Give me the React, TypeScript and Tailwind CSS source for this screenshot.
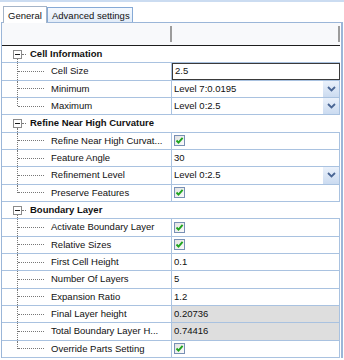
import React from "react";

type Row =
  | { kind: "cat"; label: string }
  | {
      kind: "prop";
      label: string;
      type: "text" | "edit" | "combo" | "check" | "readonly";
      value?: string;
      last?: boolean;
    };

const rows: Row[] = [
  { kind: "cat", label: "Cell Information" },
  { kind: "prop", label: "Cell Size", type: "edit", value: "2.5" },
  { kind: "prop", label: "Minimum", type: "combo", value: "Level 7:0.0195" },
  { kind: "prop", label: "Maximum", type: "combo", value: "Level 0:2.5", last: true },
  { kind: "cat", label: "Refine Near High Curvature" },
  { kind: "prop", label: "Refine Near High Curvat...", type: "check" },
  { kind: "prop", label: "Feature Angle", type: "text", value: "30" },
  { kind: "prop", label: "Refinement Level", type: "combo", value: "Level 0:2.5" },
  { kind: "prop", label: "Preserve Features", type: "check", last: true },
  { kind: "cat", label: "Boundary Layer" },
  { kind: "prop", label: "Activate Boundary Layer", type: "check" },
  { kind: "prop", label: "Relative Sizes", type: "check" },
  { kind: "prop", label: "First Cell Height", type: "text", value: "0.1" },
  { kind: "prop", label: "Number Of Layers", type: "text", value: "5" },
  { kind: "prop", label: "Expansion Ratio", type: "text", value: "1.2" },
  { kind: "prop", label: "Final Layer height", type: "readonly", value: "0.20736" },
  { kind: "prop", label: "Total Boundary Layer H...", type: "readonly", value: "0.74416" },
  { kind: "prop", label: "Override Parts Setting", type: "check", last: true },
];

function CheckBox() {
  return (
    <div className="ml-[2px] flex h-[11px] w-[11px] items-center justify-center border border-[#7890b4] bg-gradient-to-br from-[#e2e2e2] to-[#fbfbfb]">
      <svg width="9" height="9" viewBox="0 0 9 9">
        <path d="M1.5 4.5 L3.5 6.6 L7.6 1.8" fill="none" stroke="#1fa51f" strokeWidth="1.9" />
      </svg>
    </div>
  );
}

function ValueCell({ row }: { row: Extract<Row, { kind: "prop" }> }) {
  if (row.type === "edit") {
    return (
      <div className="flex h-full w-[168px] items-center border border-[#3a3a3a] bg-white pl-[2px]">
        {row.value}
      </div>
    );
  }
  if (row.type === "combo") {
    return (
      <div className="flex h-full w-[168px] items-center border-r border-[#a9c2e0]">
        <span className="flex-1 pl-[2px]">{row.value}</span>
        <div className="flex h-full w-[16px] items-center justify-center bg-gradient-to-b from-[#eaf1fb] to-[#cbdbf0]">
          <svg width="9" height="6" viewBox="0 0 9 6">
            <path d="M1 1 L4.5 4.5 L8 1" fill="none" stroke="#4a6694" strokeWidth="1.8" />
          </svg>
        </div>
      </div>
    );
  }
  if (row.type === "check") {
    return (
      <div className="flex h-full w-[168px] items-center border-r border-[#a9c2e0]">
        <CheckBox />
      </div>
    );
  }
  return (
    <div
      className={`flex h-full w-[168px] items-center border-r border-[#a9c2e0] pl-[2px] ${
        row.type === "readonly" ? "bg-[#dedede]" : ""
      }`}
    >
      {row.value}
    </div>
  );
}

function GridRow({ row }: { row: Row }) {
  if (row.kind === "cat") {
    return (
      <div className="flex h-[17.33px] w-[338px] items-center border-b border-[#a9c2e0]">
        <div className="ml-[11px] flex h-full w-[9px] flex-col items-center">
          <div className="flex-1" />
          <div className="flex h-[9px] w-[9px] items-center justify-center border border-[#8a8a8a] bg-white">
            <div className="h-[1px] w-[5px] bg-[#1a1a1a]" />
          </div>
          <div className="w-0 flex-1 border-l border-dotted border-[#777]" />
        </div>
        <div className="w-[4px] border-t border-dotted border-[#777]" />
        <span className="ml-[4px] font-bold">{row.label}</span>
      </div>
    );
  }
  return (
    <div className="flex h-[17.33px] w-[338px] border-b border-[#a9c2e0]">
      <div className="flex h-full w-[170px] items-center border-r border-[#a9c2e0]">
        <div className="ml-[15px] flex h-full w-[28px]">
          <div
            className={`w-0 border-l border-dotted border-[#777] ${row.last ? "h-1/2" : "h-full"}`}
          />
          <div className="w-[26px] self-center border-t border-dotted border-[#777]" />
        </div>
        <span className="ml-[6px] whitespace-nowrap">{row.label}</span>
      </div>
      <ValueCell row={row} />
    </div>
  );
}

export default function App() {
  return (
    <div
      className="h-[360px] w-[344px] overflow-hidden bg-white text-[9.5px] text-[#111]"
      style={{ fontFamily: '"Liberation Sans", Arial, sans-serif' }}
    >
      <div className="h-[2px] bg-[#cbdcf1]" />
      <div className="flex h-[20px] items-end pl-[3px] pt-[4px]">
        <div className="relative z-10 -mb-[1px] flex h-[17px] w-[44px] items-start border-x border-t border-[#a4b4c8] bg-white pl-[4px] pt-[2px]">
          General
        </div>
        <div className="flex h-[15px] w-[86px] items-start border border-b-0 border-[#86aad6] bg-gradient-to-b from-[#f5f9fe] to-[#e2ecf8] pl-[4px] pt-[1px]">
          Advanced settings
        </div>
      </div>
      <div className="ml-[1px] w-[342px] border-l border-r-2 border-t border-[#9bb6d8]">
        <div className="flex h-[23px] w-[338px] items-center border-b border-[#1e1e1e] bg-[#f8f9fb]">
          <div className="flex h-full w-[170px] items-center justify-end">
            <div className="h-[16px] w-[2px] bg-[#9c9c9c]" />
          </div>
          <div className="flex h-full w-[168px] items-center justify-end">
            <div className="h-[16px] w-[2px] bg-[#9c9c9c]" />
          </div>
        </div>
        {rows.map((r, i) => (
          <GridRow key={i} row={r} />
        ))}
      </div>
    </div>
  );
}
